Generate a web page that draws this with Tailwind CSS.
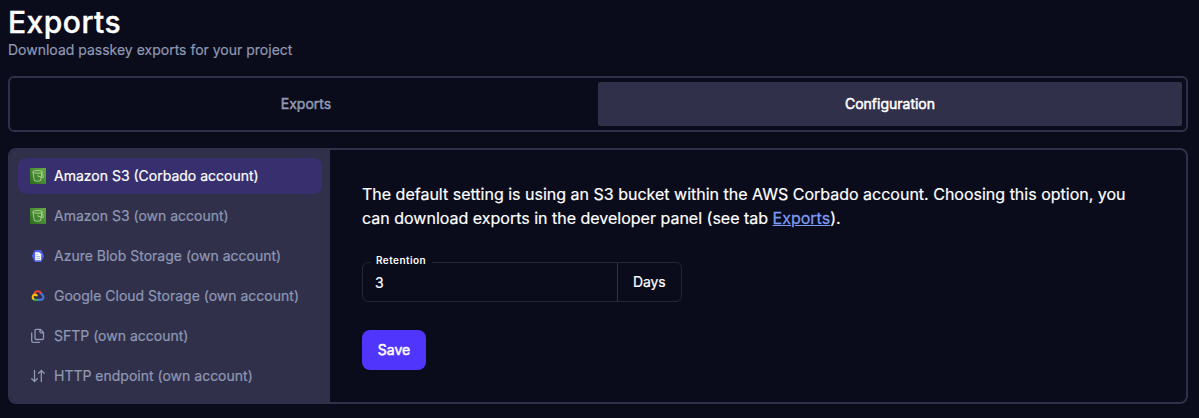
<!DOCTYPE html>
<html lang="en">
<head>
<meta charset="utf-8">
<title>Exports</title>
<script src="https://cdn.jsdelivr.net/npm/@tailwindcss/browser@4"></script>
</head>
<body class="h-[418px] overflow-hidden bg-[#0a0b1b] pl-2 pr-[11px] font-['Inter',sans-serif] text-sm text-white antialiased [-webkit-text-stroke:0.2px]">
<header class="h-[76px] pt-1">
  <h1 class="h-9 text-[30px] leading-9 font-medium tracking-[0.5px] [-webkit-text-stroke:0.4px]"><span class="inline-block whitespace-nowrap">Exports</span></h1>
  <p class="h-5 leading-5 text-[#8f98b3]"><span class="whitespace-nowrap">Download passkey exports for your project</span></p>
</header>
<nav class="flex h-14 rounded-md border-2 border-[#30304b] p-1 text-center leading-[44px] [-webkit-text-stroke:0.5px]">
  <div class="w-[584px] text-[#8f98b3]">Exports</div>
  <div class="flex-1 rounded-[2px] bg-[#30304b]">Configuration</div>
</nav>
<main class="mt-4 flex h-64 overflow-hidden rounded-lg border-2 border-[#30304b]">
  <aside class="flex w-80 shrink-0 flex-col gap-1 bg-[#30304b] p-2 text-[#8f98b3] *:flex *:h-9 *:w-[304px] *:shrink-0 *:items-center *:gap-2 *:rounded-lg *:px-3 *:whitespace-nowrap">
    <div class="bg-[#38306e] text-white">
      <svg class="size-4" viewBox="0 0 16 16"><defs><linearGradient id="g" x1="0" y1="1" x2="1" y2="0"><stop stop-color="#2a6b1e"/><stop offset="1" stop-color="#66ad40"/></linearGradient></defs><path fill="url(#g)" d="M0 0h16v16H0z"/><g fill="none" stroke="#c3dcb9" stroke-width=".75"><path d="M3 4.200 4.300 12.600Q7.500 13.900 10.700 12.600l1.200-8.400"/><path d="M2.700 3.800C2.700 2 12.700 2 12.700 3.800S2.700 5.600 2.700 3.800M7.500 7.800l4.800 1.700q1.700.2.900-1.300l-.6-2.500"/></g></svg>
      <span>Amazon S3 (Corbado account)</span>
    </div>
    <div>
      <svg class="size-4" viewBox="0 0 16 16"><path fill="url(#g)" d="M0 0h16v16H0z"/><g fill="none" stroke="#c3dcb9" stroke-width=".75"><path d="M3 4.200 4.300 12.600Q7.500 13.900 10.700 12.600l1.200-8.400"/><path d="M2.700 3.800C2.700 2 12.700 2 12.700 3.800S2.700 5.600 2.700 3.800M7.500 7.800l4.800 1.700q1.700.2.900-1.300l-.6-2.500"/></g></svg>
      <span>Amazon S3 (own account)</span>
    </div>
    <div>
      <svg class="size-4" viewBox="0 0 16 16"><path d="M5.200 2.600h5.600L13.500 8l-2.700 5.400H5.200L2.500 8z" fill="#4f63e8" stroke="#4f63e8" stroke-width="1.200" stroke-linejoin="round"/><path fill="#fff" d="M5.200 4.200h3.900l2 2v6H5.200z"/><path stroke="#86a5ef" stroke-width=".8" d="M6.300 6.600h2M6.300 8.500H10M6.300 10.400H10"/></svg>
      <span>Azure Blob Storage (own account)</span>
    </div>
    <div>
      <svg class="size-4" viewBox="0 0 16 16" fill="none" stroke-width="2.100"><path stroke="#ea4335" d="M4.300 6.100C5.200 2.500 10 2.300 11.200 5.800"/><path stroke="#4673df" d="M10.500 5.500c2.300 1 3.600 3.200 2.600 5-.6 1.200-1.500 1.400-2.700 1.400H8"/><path stroke="#34a853" d="M8.200 11.900H5.300l-1.300-.4"/><path stroke="#fbbc05" d="M4.200 11.600C1.600 9.900 2.500 6.800 5 6.600q1.600 0 2 1.600"/></svg>
      <span>Google Cloud Storage (own account)</span>
    </div>
    <div>
      <svg class="size-4" viewBox="0 0 16 16" fill="none" stroke="currentColor" stroke-width="1.300" stroke-linejoin="round" stroke-linecap="round"><path d="M6.300 1.300h3.900l3.300 3.200v5.700q0 1.300-1.300 1.300H6.300Q5 11.500 5 10.200V2.600Q5 1.300 6.300 1.300M9.900 1.500v2.200q0 1.100 1.100 1.100h2.300M1.700 5v7.700q0 1.600 1.600 1.600h6.200"/></svg>
      <span>SFTP (own account)</span>
    </div>
    <div>
      <svg class="size-4" viewBox="0 0 16 16" fill="none" stroke="currentColor" stroke-width="1.300" stroke-linejoin="round" stroke-linecap="round"><path d="M4.500 2.500v11M1.700 10.700l2.800 2.800 2.800-2.800M11.300 13.500v-11M8.500 5.300l2.800-2.800 2.800 2.800"/></svg>
      <span>HTTP endpoint (own account)</span>
    </div>
  </aside>
  <section class="flex-1 px-8 pt-8">
    <p class="text-base leading-6 whitespace-nowrap">The default setting is using an S3 bucket within the AWS Corbado account. Choosing this option, you<br>can download exports in the developer panel (see tab <a class="text-[#7c9af2] underline [-webkit-text-stroke:0.3px]">Exports</a>).</p>
    <div class="relative mt-8 flex h-10 w-80 rounded-md border border-[#25263a]">
      <label class="absolute -top-[9px] left-[7px] bg-[#0a0b1b] px-1.5 text-[10px] leading-3 font-semibold tracking-[0.45px] [-webkit-text-stroke:0px]">Retention</label>
      <div class="flex-1 pl-3 pt-px leading-[38px]">3</div>
      <div class="w-16 border-l border-[#30304b] pl-[15px] leading-[38px]"><span class="tracking-[-0.1px]">Days</span></div>
    </div>
    <button class="mt-7 h-10 w-16 rounded-lg bg-[#5035fc] [-webkit-text-stroke:0.5px]">Save</button>
  </section>
</main>
</body>
</html>
